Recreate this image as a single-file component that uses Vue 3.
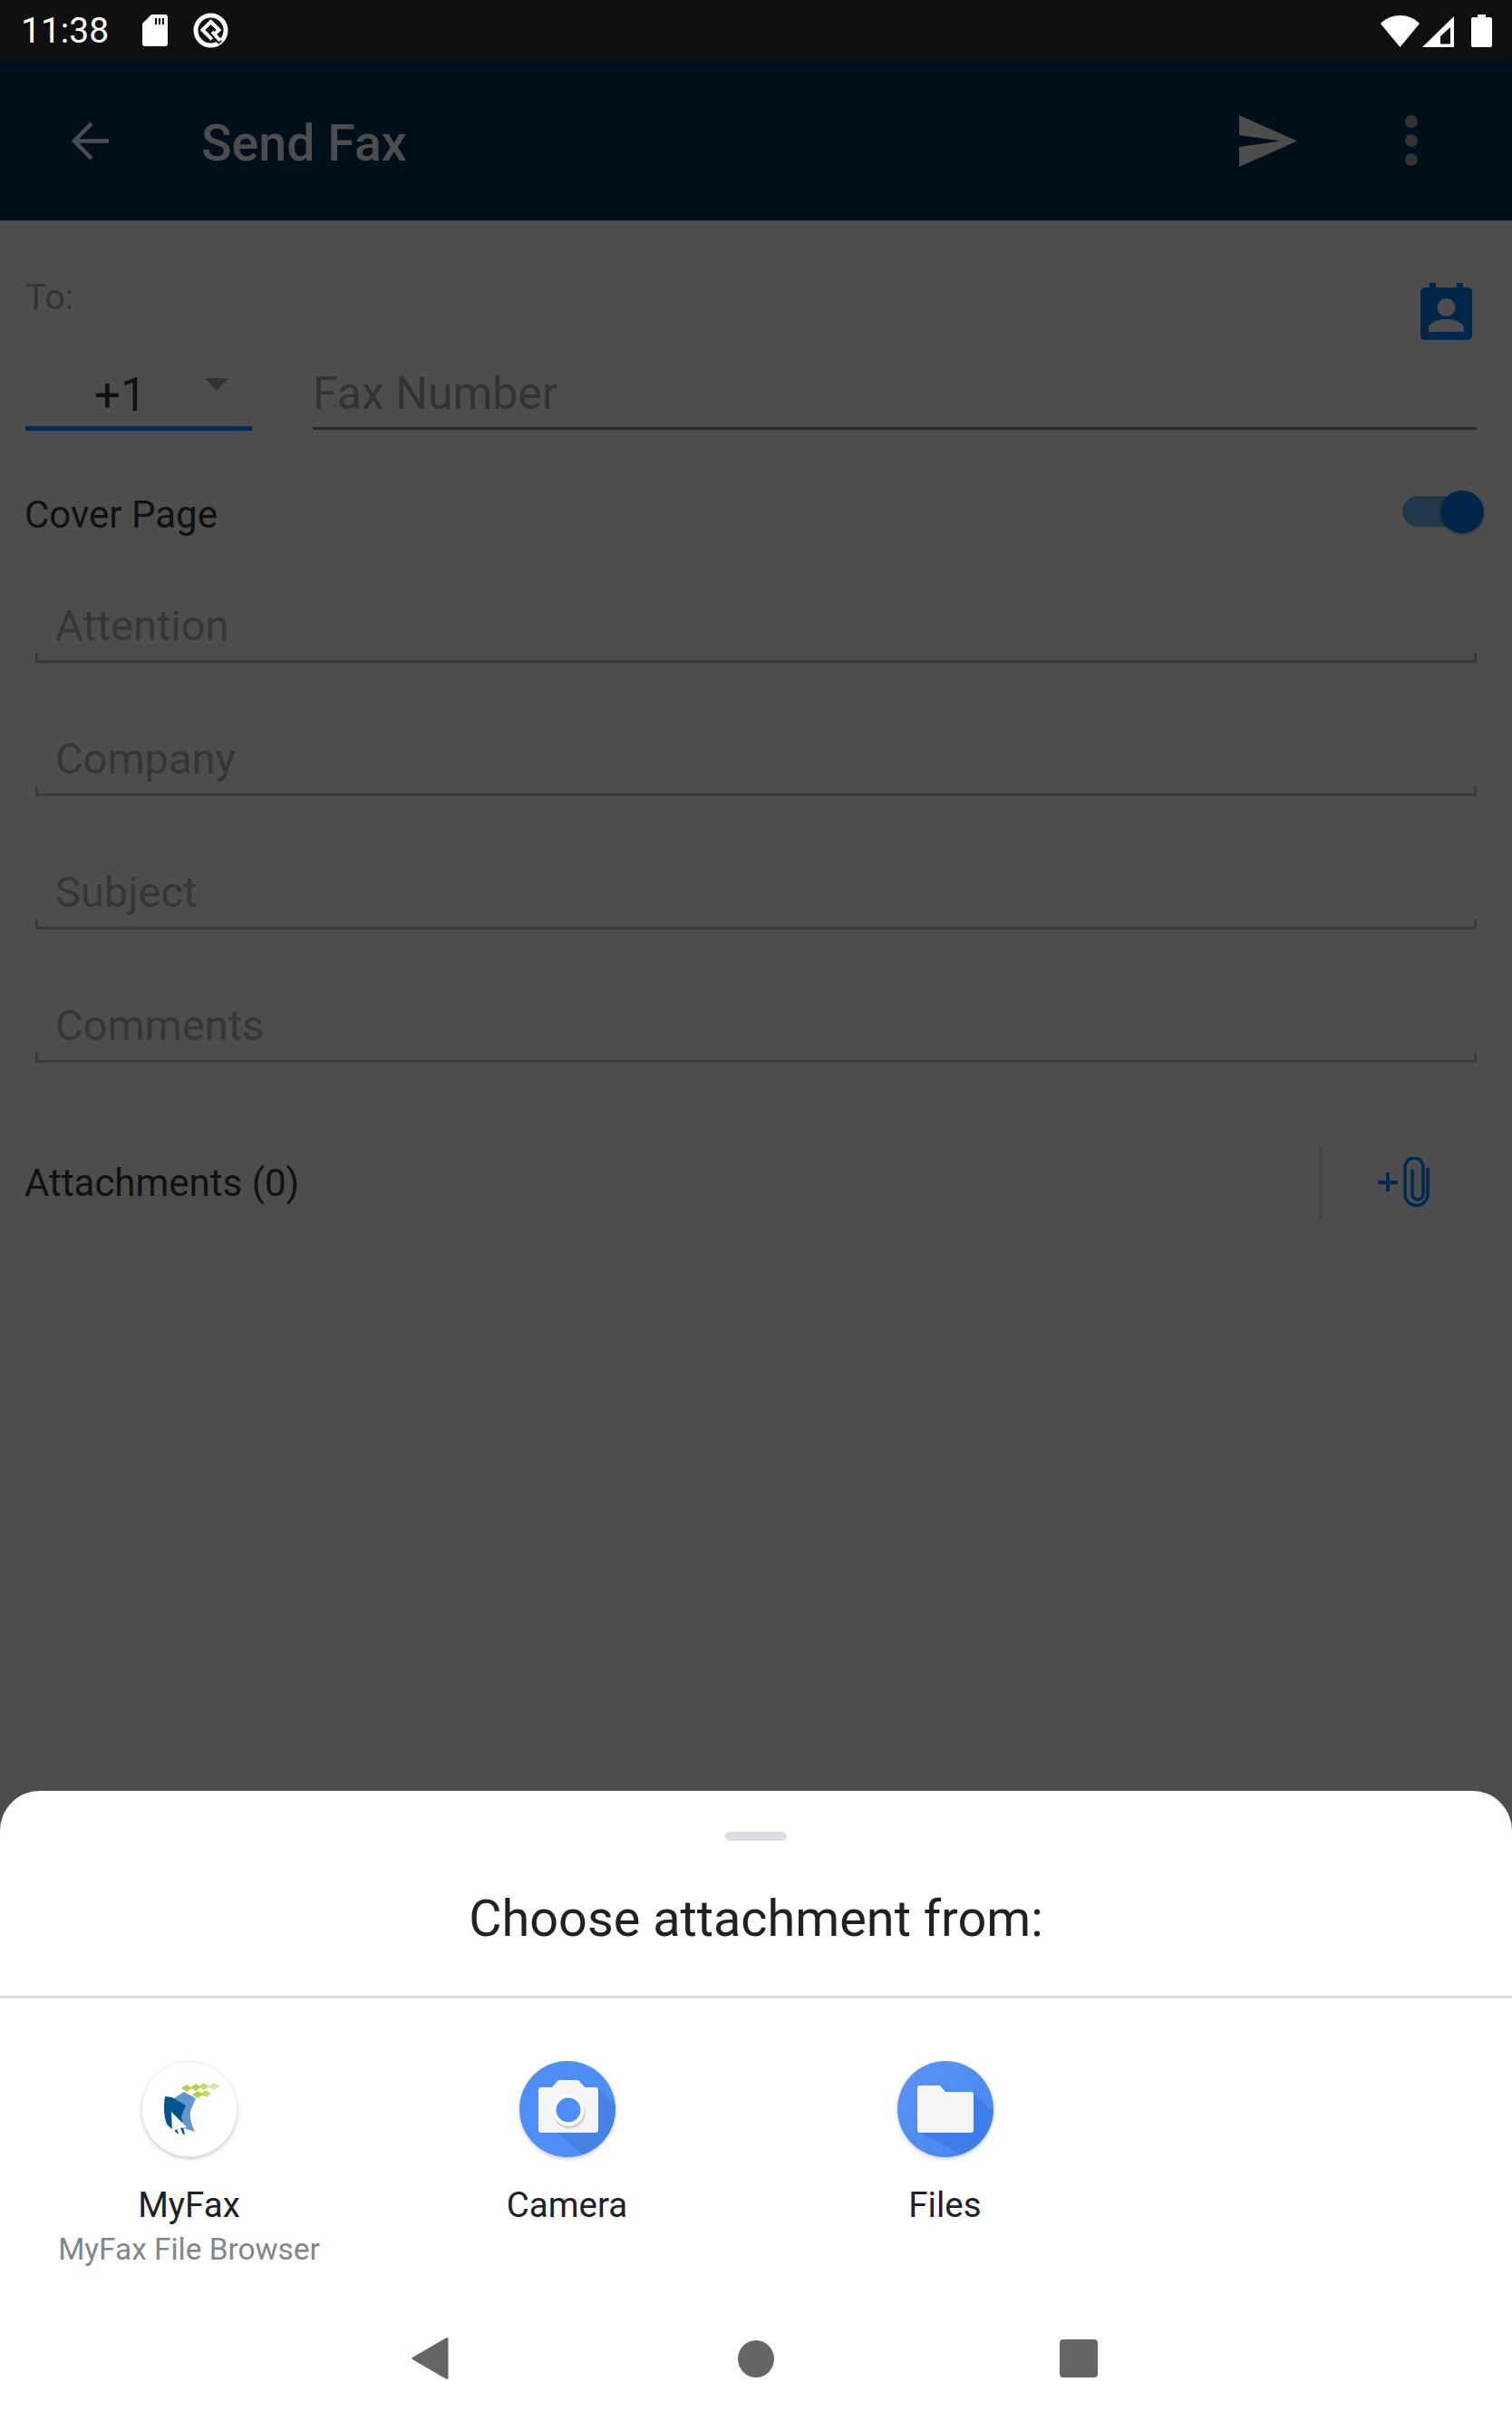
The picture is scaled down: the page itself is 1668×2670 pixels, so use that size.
<template>
  <div class="page">
    <!-- status bar -->
    <div class="status-bar">
      <span class="time">11:38</span>
      <svg class="sd" viewBox="0 0 28 35"><path d="M10 0h15a3 3 0 0 1 3 3v29a3 3 0 0 1-3 3H3a3 3 0 0 1-3-3V10z" fill="#fff"/><path d="M14 4h2v7h-2zM18 4h2v7h-2zM22 4h2v7h-2z" fill="#0f0f0f"/></svg>
      <svg class="vpn" viewBox="0 0 39 39"><circle cx="19.500" cy="19.500" r="16.500" fill="none" stroke="#fff" stroke-width="5"/><path d="M19.500 10l9 9-9 9-9-9z" fill="none" stroke="#fff" stroke-width="4"/><path d="M19 21l11 12" stroke="#0f0f0f" stroke-width="5"/><path d="M21 21l9 10" stroke="#fff" stroke-width="4"/></svg>
      <div class="status-right">
        <svg class="wifi" viewBox="0 0 43 35"><path d="M0 9C6 3 13 0 21.500 0S37 3 43 9L21.500 35z" fill="#fff"/></svg>
        <svg class="signal" viewBox="0 0 35 34"><path fill-rule="evenodd" d="M35 0v34H0zM31 12L20 22v8.500h11z" fill="#fff"/></svg>
        <svg class="battery" viewBox="0 0 23 36"><path d="M7 0h9v3h5a2 2 0 0 1 2 2v29a2 2 0 0 1-2 2H2a2 2 0 0 1-2-2V5a2 2 0 0 1 2-2h5z" fill="#fff"/></svg>
      </div>
    </div>

    <!-- app bar -->
    <div class="app-bar">
      <svg class="back" viewBox="0 0 43 43"><path d="M41 21.500H4M22 2L3 21.500 22 41" fill="none" stroke="#4d4d4d" stroke-width="4.500"/></svg>
      <div class="title">Send Fax</div>
      <svg class="send" viewBox="0 0 64 57"><path d="M0 0l64 28.500L0 57V35l46-6.500L0 22z" fill="#4d4d4d"/></svg>
      <div class="dots"><i></i><i></i><i></i></div>
    </div>

    <div class="content">
      <div class="to-row">
        <span class="to">To:</span>
        <svg class="contact" viewBox="0 0 57 63"><path d="M10 0h7v5h23V0h7v5h5a5 5 0 0 1 5 5v48a5 5 0 0 1-5 5H5a5 5 0 0 1-5-5V10a5 5 0 0 1 5-5h5z" fill="#00264a"/><circle cx="28.500" cy="27" r="10" fill="#4d4d4d"/><path d="M9 54v-4c0-7 13-10 19.500-10S48 43 48 50v4z" fill="#4d4d4d"/></svg>
      </div>
      <div class="number-row">
        <div class="code">
          <span>+1</span>
          <i class="caret"></i>
        </div>
        <div class="fax">Fax Number</div>
      </div>
      <div class="cover">
        <span>Cover Page</span>
        <div class="toggle"><i></i></div>
      </div>
      <div class="fields">
        <div class="field" v-for="f in fields" :key="f">
          <div class="field-text">{{ f }}</div>
          <div class="field-line"></div>
        </div>
      </div>
      <div class="attach">
        <span>Attachments (0)</span>
        <div class="attach-btn">
          <svg class="clip" viewBox="0 0 57 56"><path d="M0 28h22M11 17v21" stroke="#002b50" stroke-width="4" fill="none"/><path d="M55 12V41A12.500 12.500 0 0 1 30 41V11A10 10 0 0 1 50 11V41A6 6 0 0 1 38 41V14" stroke="#002b50" stroke-width="3.500" fill="none"/></svg>
        </div>
      </div>
    </div>

    <!-- bottom sheet -->
    <div class="sheet">
      <div class="handle"></div>
      <div class="sheet-title">Choose attachment from:</div>
      <div class="sheet-line"></div>
      <div class="apps">
        <div class="app">
          <svg class="app-icon" viewBox="0 0 106 106">
            <circle cx="53" cy="53" r="52.500" fill="#fff" stroke="#eee" stroke-width="1"/>
            <path d="M36 41l11-7 13 7-6 14c-1 6 1 15 5 23l-12-4-9-8z" fill="#6197ca"/>
            <path d="M26 39l8 1 15 9-5 12 2 12 2 8-8-1-11-9c-4-6-5-20-3-32z" fill="#00558f"/>
            <path d="M33 56l17 17-7 1 3 7-4 1-3-7-5 4z" fill="#fff"/>
            <g fill="#b5cf4a">
              <path d="M50 26l6 4-6 4-6-4z"/><path d="M60 25l6 4-6 4-6-4z"/><path d="M69 24l6 4-6 4-6-4z" opacity=".8"/><path d="M80 24l6 4-6 4-6-4z" opacity=".55"/><path d="M62 33l6 4-6 4-6-4z"/><path d="M71 32l6 4-6 4-6-4z" opacity=".8"/>
            </g>
          </svg>
          <div class="app-name">MyFax</div>
          <div class="app-sub">MyFax File Browser</div>
        </div>
        <div class="app">
          <svg class="app-icon" viewBox="0 0 106 106">
            <circle cx="53" cy="53" r="53" fill="#4f8ef7"/>
            <path d="M87 30l19 19v4a53 53 0 0 1-36 50L42 79z" fill="#4782e3"/>
            <path d="M24 29h12l6-7a3 3 0 0 1 2-1h20a3 3 0 0 1 2 1l6 7h12a3 3 0 0 1 3 3v44a3 3 0 0 1-3 3H24a3 3 0 0 1-3-3V32a3 3 0 0 1 3-3z" fill="#f5f5f5"/>
            <circle cx="55" cy="56.500" r="18" fill="#000" opacity=".14"/>
            <circle cx="54" cy="54" r="17.500" fill="#fff"/>
            <circle cx="54" cy="54" r="13.500" fill="#4f8ef7"/>
          </svg>
          <div class="app-name">Camera</div>
        </div>
        <div class="app">
          <svg class="app-icon" viewBox="0 0 106 106">
            <defs><linearGradient id="fg" x1="0" y1="0" x2="1" y2="1"><stop offset="0" stop-color="#5c95f5"/><stop offset="1" stop-color="#4385f0"/></linearGradient></defs>
            <circle cx="53" cy="53" r="53" fill="url(#fg)"/>
            <path d="M81 35l25 20a53 53 0 0 1-36 48L24 78z" fill="#3f7ee8"/>
            <path d="M25 27h21a3 3 0 0 1 2 1l5 6h28a3 3 0 0 1 3 3v39a3 3 0 0 1-3 3H25a3 3 0 0 1-3-3V30a3 3 0 0 1 3-3z" fill="#f5f5f5"/>
          </svg>
          <div class="app-name">Files</div>
        </div>
      </div>
      <div class="nav">
        <svg class="nav-back" viewBox="0 0 41 46"><path d="M39 1.500v43L2 23z" fill="#666" stroke="#666" stroke-width="3" stroke-linejoin="round"/></svg>
        <i class="nav-home"></i>
        <i class="nav-recent"></i>
      </div>
    </div>
  </div>
</template>

<script setup>
const fields = ['Attention', 'Company', 'Subject', 'Comments']
</script>

<style>
html, body { margin: 0; background: #4d4d4d; }
</style>

<style scoped>
.page {
  position: relative;
  width: 1668px;
  height: 2670px;
  overflow: hidden;
  background: #4d4d4d;
  font-family: Roboto, "Liberation Sans", sans-serif;
}

/* status bar */
.status-bar {
  height: 67px;
  background: #0f0f0f;
  display: flex;
  align-items: center;
  padding: 0 22px 0 23px;
  color: #fff;
}
.time { font-size: 39px; width: 134px; line-height: 67px; padding-top: 2px; }
.sd { width: 28px; height: 35px; margin-right: 28px; }
.vpn { width: 39px; height: 39px; }
.status-right { margin-left: auto; display: flex; align-items: flex-end; height: 36px; }
.wifi { width: 43px; height: 35px; margin-right: 3px; }
.signal { width: 35px; height: 34px; margin-right: 19px; }
.battery { width: 23px; height: 36px; }

/* app bar */
.app-bar {
  height: 177px;
  background: #00101a;
  border-bottom: 1px solid #3a4148;
  box-sizing: border-box;
  display: flex;
  align-items: center;
  padding-left: 79px;
}
.back { width: 43px; height: 43px; margin-right: 100px; }
.title { font-size: 55.500px; font-weight: 500; color: #4d4d4d; padding-top: 6px; }
.send { width: 64px; height: 57px; margin-left: auto; margin-right: 119px; }
.dots { display: flex; flex-direction: column; gap: 7px; margin-right: 104px; }
.dots i { width: 14px; height: 14px; border-radius: 50%; background: #333; }

/* form */
.content { padding: 0 39px 0 28px; }
.to-row { display: flex; justify-content: space-between; padding-top: 68px; height: 76px; }
.to { font-size: 39px; line-height: 42px; color: #333; margin-top: -5px; }
.contact { width: 57px; height: 63px; margin-right: 5px; }
.number-row { display: flex; margin-top: 18px; height: 69px; align-items: flex-end; }
.code {
  width: 250px;
  height: 66px;
  position: relative;
  box-sizing: border-box;
  border-bottom: 5px solid #002b50;
  font-size: 51px;
  line-height: 53px;
  color: #111;
  padding-left: 76px;
}
.caret {
  position: absolute;
  left: 198px;
  top: 8px;
  border-left: 13px solid transparent;
  border-right: 13px solid transparent;
  border-top: 14px solid #333;
}
.fax {
  flex: 1;
  margin-left: 67px;
  height: 66px;
  box-sizing: border-box;
  border-bottom: 3px solid #2a2a2a;
  font-size: 50px;
  line-height: 53px;
  color: #333;
  margin-bottom: 1px;
}
.cover {
  display: flex;
  justify-content: space-between;
  align-items: center;
  height: 66px;
  margin-top: 56px;
  font-size: 42px;
  color: #111;
}
.cover span { margin: 7px 0 0 -1px; }
.toggle {
  width: 80px;
  height: 34px;
  margin-right: 2px;
  margin-left: auto;
  border-radius: 17px;
  background: #23374a;
  position: relative;
}
.toggle i {
  position: absolute;
  right: -10px;
  top: -6px;
  width: 48px;
  height: 47px;
  border-radius: 50%;
  background: #00264a;
  box-shadow: 0 2px 3px rgba(0, 0, 0, 0.25);
}
.fields { margin-left: 11px; display: flex; flex-direction: column; gap: 13px; }
.field { height: 134px; display: flex; flex-direction: column; justify-content: flex-end; }
.field-text { font-size: 47px; line-height: 60px; color: #363636; padding-left: 22px; }
.field-line {
  height: 11px;
  box-sizing: border-box;
  border: 3px solid #3a3a3a;
  border-top: 0;
}
.attach {
  display: flex;
  align-items: center;
  justify-content: space-between;
  height: 84px;
  margin-top: 90px;
  font-size: 42px;
  color: #111;
}
.attach span { margin-left: -1px; }
.attach-btn {
  width: 174px;
  height: 84px;
  border-left: 3px solid #444;
  box-sizing: border-box;
  padding: 14px 0 0 62px;
}
.clip { display: block; width: 57px; height: 56px; }

/* bottom sheet */
.sheet {
  position: absolute;
  left: 0;
  right: 0;
  bottom: 0;
  height: 695px;
  box-sizing: border-box;
  background: #fff;
  border-radius: 44px 44px 0 0;
  padding-top: 45px;
}
.handle { width: 68px; height: 10px; border-radius: 5px; background: #dadce0; margin: 0 auto; }
.sheet-title {
  text-align: center;
  font-size: 55.800px;
  line-height: 70px;
  color: #202124;
  margin-top: 51px;
}
.sheet-line { height: 3px; background: #dadce0; margin-top: 50px; }
.apps { display: grid; grid-template-columns: repeat(4, 417px); padding-top: 69px; height: 300px; }
.app { display: flex; flex-direction: column; align-items: center; }
.app-icon { width: 106px; height: 106px; filter: drop-shadow(0 2px 2px rgba(0, 0, 0, 0.2)); overflow: visible; }
.app-name { font-size: 38.500px; line-height: 46px; color: #202124; margin-top: 30px; }
.app-sub { font-size: 33.400px; line-height: 40px; color: #80868b; margin-top: 6px; }
.nav {
  display: flex;
  align-items: center;
  justify-content: center;
  gap: 315px;
  height: 46px;
  margin: 5px 3px 0 0;
}
.nav-back { width: 41px; height: 46px; margin-right: 4px; }
.nav-home { width: 40px; height: 41px; border-radius: 50%; background: #666; }
.nav-recent { width: 42px; height: 42px; border-radius: 4px; background: #666; }
</style>
